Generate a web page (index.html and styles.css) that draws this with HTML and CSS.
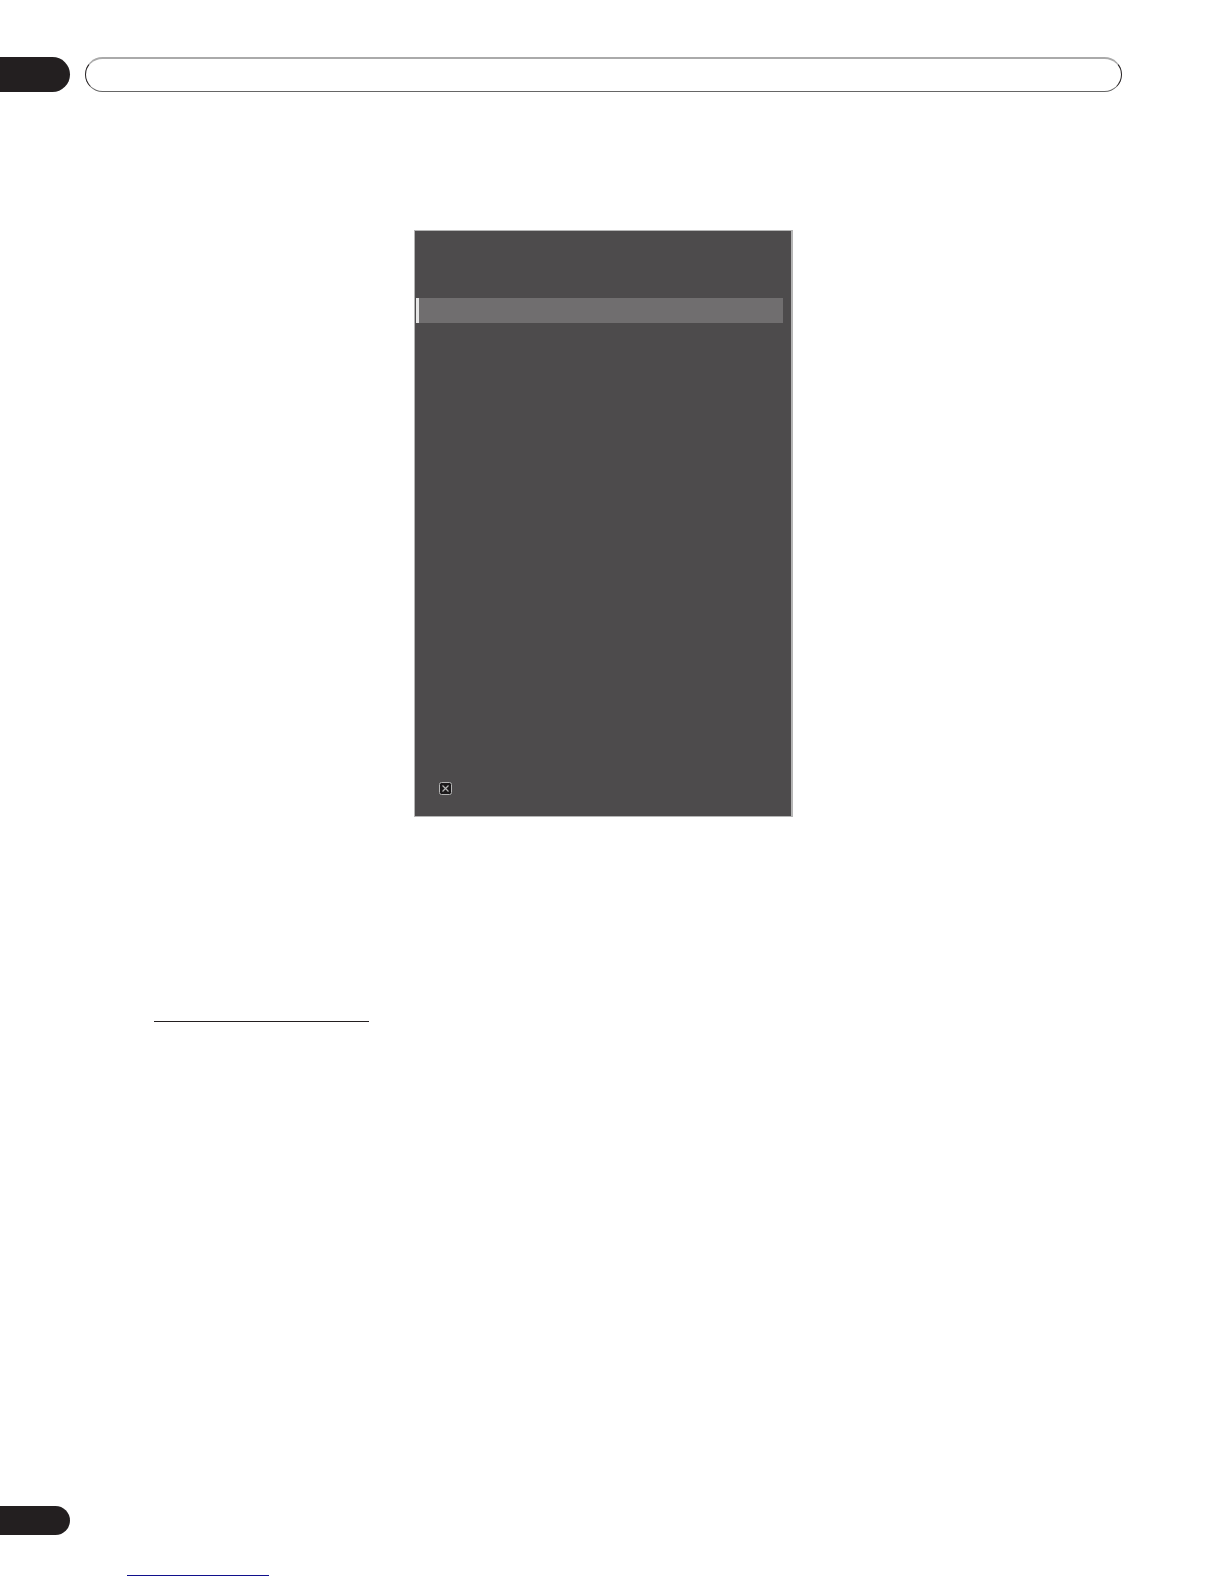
FILE: index.html
```
<!DOCTYPE html>
<html lang="en">
<head>
    <meta charset="UTF-8">
    <meta name="viewport" content="width=device-width, initial-scale=1.0">
    <title>Menu</title>
    <link rel="stylesheet" href="styles.css">
</head>
<body>
    <header class="page-header">
        <div class="tab chapter-tab"></div>
        <div class="title-bar"></div>
    </header>

    <main class="content">
        <section class="menu">
            <div class="menu-title"></div>
            <div class="menu-item selected"></div>
            <div class="menu-footer">
                <button type="button" class="close-button" aria-label="Close">
                    <svg viewBox="0 0 13 13" width="13" height="13">
                        <rect x="0.5" y="0.5" width="12" height="12" rx="2" fill="#1c1a1b" stroke="#b5b5b5"/>
                        <path d="M3.5 3.5 L9.5 9.5 M9.5 3.5 L3.5 9.5" stroke="#b5b5b5" stroke-width="1.2" fill="none"/>
                    </svg>
                </button>
            </div>
        </section>
        <hr class="note-line">
    </main>

    <footer class="page-footer">
        <div class="tab page-tab"></div>
        <a class="footer-link" href="#" aria-label="Back to top"></a>
    </footer>
</body>
</html>
```

FILE: styles.css
```
* {
    box-sizing: border-box;
}

body {
    font-family: "Liberation Sans", Arial, sans-serif;
    background-color: #fff;
    color: #231f20;
    margin: 0;
    min-height: 100vh;
    display: flex;
    flex-direction: column;
}

.page-header {
    display: flex;
    gap: 15px;
    padding: 57px 102px 0 0;
}

.tab {
    width: 70px;
    background-color: #231f20;
    border-radius: 0 18px 18px 0;
}

.chapter-tab {
    height: 35px;
}

.title-bar {
    flex: 1;
    border: 1px solid #231f20;
    border-top: 2px solid #aaa;
    border-bottom-color: #666;
    border-radius: 18px;
}

.content {
    flex: 1;
    padding: 138px 102px 0 85px;
}

/* on-screen menu panel */
.menu {
    display: flex;
    flex-direction: column;
    width: 100%;
    max-width: 379px;
    min-height: 587px;
    margin: 0 auto;
    background-color: #4d4b4c;
    border: 1px solid #b5b5b5;
    border-right-width: 2px;
}

.menu-title {
    height: 67px;
}

.menu-item {
    height: 25px;
    margin: 0 8px 0 1px;
}

.selected {
    background-color: #706e6f;
    border-left: 3px solid #e6e6e6;
}

.menu-footer {
    display: flex;
    margin-top: auto;
    padding: 0 24px 21px;
}

.close-button {
    display: flex;
    padding: 0;
    border: none;
    background: none;
    cursor: pointer;
}

.note-line {
    width: 215px;
    margin: 204px 0 0 69px;
    border: none;
    border-top: 1px solid #231f20;
}

.page-footer {
    padding-bottom: 8px;
}

.page-tab {
    height: 29px;
    border-radius: 0 15px 15px 0;
}

.footer-link {
    display: block;
    width: 142px;
    margin: 40px 0 0 127px;
    border-bottom: 1px solid #10108c;
}
```
